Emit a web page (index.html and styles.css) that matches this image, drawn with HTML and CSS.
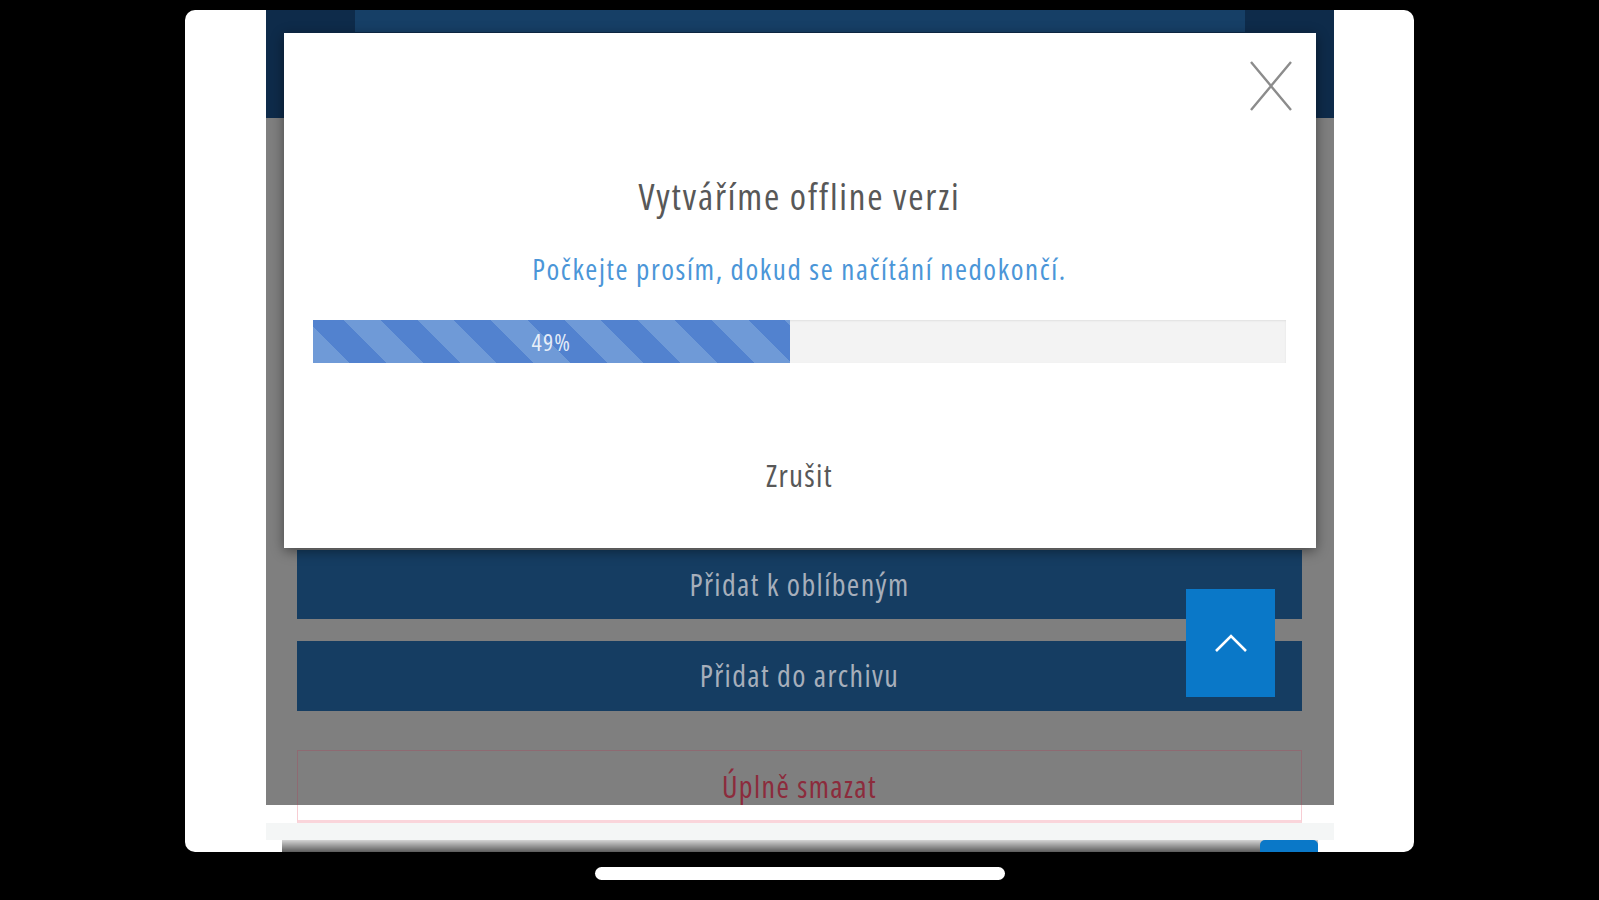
FILE: index.html
```html
<!DOCTYPE html>
<html lang="cs">
  <head>
    <meta charset="UTF-8" />
    <meta name="viewport" content="width=device-width, initial-scale=1.0" />
    <title>Vytváříme offline verzi</title>
    <link rel="stylesheet" href="styles.css">
  </head>
  <body>
    <div class="device">
      <!-- Obsah aplikace pod dialogem -->
      <div class="app">
        <div class="app-dim">
          <header class="app-header">
            <div class="header-strip"></div>
          </header>
          <div class="actions">
            <button class="action-btn">Přidat k oblíbeným</button>
            <button class="action-btn action-btn-last">Přidat do archivu</button>
            <button class="delete-btn">Úplně smazat</button>
          </div>
        </div>
        <div class="app-foot">
          <div class="delete-tail"></div>
          <div class="foot-light"></div>
          <div class="tabbar"><span class="tabbar-active"></span></div>
        </div>
      </div>

      <!-- Dialog stahování -->
      <div class="modal">
        <button class="modal-close" aria-label="Zavřít">
          <svg width="42" height="50" viewBox="0 0 42 50">
            <path d="M1 1 L41 49 M41 1 L1 49" stroke="#8c8c8c" stroke-width="2.4" fill="none" />
          </svg>
        </button>
        <h2 class="modal-title">Vytváříme offline verzi</h2>
        <p class="modal-text">Počkejte prosím, dokud se načítání nedokončí.</p>
        <div class="progress">
          <div class="progress-bar" style="width: 49%">49%</div>
        </div>
        <a href="#" class="modal-cancel">Zrušit</a>
      </div>

      <button class="scroll-top" aria-label="Nahoru">
        <svg width="34" height="20" viewBox="0 0 34 20">
          <path d="M2 18 L17 3 L32 18" stroke="#ffffff" stroke-width="2.6" fill="none" />
        </svg>
      </button>
    </div>
    <div class="home-indicator"></div>
  </body>
</html>
```

FILE: styles.css
```css
/* ======= Proměnné ======= */
:root {
  --font-family: "Open Sans", "Liberation Sans", sans-serif;
  --color-dim: #7f7f7f;
  --color-header: #0e2b4a;
  --color-header-strip: #163f66;
  --color-button: #153d62;
  --color-button-text: #a7afbb;
  --color-danger-text: #8c2b3c;
  --color-text: #585858;
  --color-link: #4b96d8;
  --color-accent: #0a78c8;
}

/* ======= Globální styly ======= */
* {
  box-sizing: border-box;
  margin: 0;
  padding: 0;
}

body {
  font-family: var(--font-family);
  font-stretch: 75%;
  letter-spacing: 1.4px;
  background-color: #000;
  padding-top: 10px;
  height: 900px;
  overflow: hidden;
}

button {
  font-family: inherit;
  font-stretch: inherit;
  letter-spacing: inherit;
  border: none;
  cursor: pointer;
}

/* ======= Rám zařízení ======= */
.device {
  position: relative;
  width: 1229px;
  height: 842px;
  margin: 0 auto;
  padding-left: 81px;
  background-color: #fff;
  border-radius: 10px;
  overflow: hidden;
}

.app {
  width: 1068px;
  height: 100%;
  display: flex;
  flex-direction: column;
}

.app-dim {
  height: 795px;
  background-color: var(--color-dim);
  display: flex;
  flex-direction: column;
}

.app-header {
  height: 108px;
  background-color: var(--color-header);
}

.header-strip {
  height: 22px;
  margin: 0 89px;
  background-color: var(--color-header-strip);
}

/* ======= Tlačítka akcí ======= */
.actions {
  flex: 1;
  display: flex;
  flex-direction: column;
  padding: 432px 32px 0 31px;
}

.action-btn {
  height: 69px;
  margin-bottom: 22px;
  background-color: var(--color-button);
  color: var(--color-button-text);
  font-size: 30px;
  line-height: 32px;
}

.action-btn-last {
  height: 70px;
  margin-bottom: 39px;
}

.delete-btn {
  flex: 1;
  padding-top: 20px;
  background-color: transparent;
  border: 1px solid #8e6a72;
  border-bottom: none;
  color: var(--color-danger-text);
  font-size: 30px;
  line-height: 32px;
  display: flex;
  justify-content: center;
  align-items: flex-start;
}

/* ======= Spodní část ======= */
.app-foot {
  flex: 1;
  display: flex;
  flex-direction: column;
  background-color: #fff;
}

.delete-tail {
  height: 18px;
  margin: 0 32px 0 31px;
  border: 1px solid #f7cdd3;
  border-top: none;
  border-bottom: 3px solid #fad5db;
}

.foot-light {
  height: 17px;
  background-color: #f4f6f6;
}

.tabbar {
  flex: 1;
  width: 1036px;
  margin-left: 16px;
  display: flex;
  justify-content: flex-end;
  background: linear-gradient(#d4d4d4, #5c5c5c);
}

.tabbar-active {
  width: 58px;
  background-color: var(--color-accent);
  border-radius: 5px 5px 0 0;
}

/* ======= Dialog ======= */
.modal {
  position: absolute;
  left: 99px;
  top: 23px;
  width: 1032px;
  height: 515px;
  padding: 144px 30px 0 29px;
  background-color: #fff;
  box-shadow: 0 3px 12px rgba(0, 0, 0, 0.45);
  display: flex;
  flex-direction: column;
  align-items: center;
  text-align: center;
}

.modal-close {
  position: absolute;
  top: 28px;
  right: 24px;
  background: none;
  line-height: 0;
}

.modal-title {
  font-size: 37px;
  line-height: 38px;
  font-weight: normal;
  letter-spacing: 1.8px;
  color: var(--color-text);
}

.modal-text {
  margin-top: 38px;
  font-size: 29px;
  line-height: 31px;
  letter-spacing: 1.6px;
  color: var(--color-link);
}

.progress {
  width: 100%;
  height: 43px;
  margin-top: 36px;
  background-color: #f3f3f3;
  box-shadow: inset 0 1px 2px rgba(0, 0, 0, 0.08);
  display: flex;
}

.progress-bar {
  height: 100%;
  background-color: #5282cf;
  background-image: repeating-linear-gradient(
    45deg,
    #6f9ad7 0,
    #6f9ad7 26px,
    #5282cf 26px,
    #5282cf 52px
  );
  color: rgba(255, 255, 255, 0.85);
  font-size: 24px;
  line-height: 43px;
  letter-spacing: 1.2px;
  text-align: center;
}

.modal-cancel {
  margin-top: 96px;
  font-size: 31px;
  line-height: 32px;
  letter-spacing: 1.3px;
  color: var(--color-text);
  text-decoration: none;
}

/* ======= Tlačítko nahoru ======= */
.scroll-top {
  position: absolute;
  left: 1001px;
  top: 579px;
  width: 89px;
  height: 108px;
  background-color: var(--color-accent);
  display: flex;
  justify-content: center;
  align-items: center;
}

/* ======= Indikátor domů ======= */
.home-indicator {
  width: 410px;
  height: 13px;
  margin: 15px auto 0;
  background-color: #fff;
  border-radius: 7px;
}
```
